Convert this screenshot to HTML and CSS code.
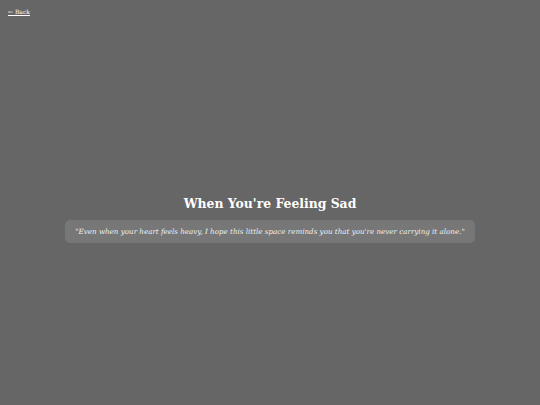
FILE: index.html
```html
<!DOCTYPE html>
<html>
<head>
<meta charset="utf-8">
<link rel="stylesheet" href="styles.css">
</head>
<body>
<div class="page">
  <nav class="topbar"><a class="back" href="#">← Back</a></nav>
  <main class="content">
    <h1 class="title">When You're Feeling Sad</h1>
    <p class="quote">"Even when your heart feels heavy, I hope this little space reminds you that you're never carrying it alone."</p>
  </main>
</div>
</body>
</html>
```
FILE: styles.css
```css
html, body {
  margin: 0;
  padding: 0;
  background: #666666;
}
.page {
  height: 405px;
  display: flex;
  flex-direction: column;
  font-family: "DejaVu Serif", serif;
  color: #ffffff;
}
.topbar {
  padding: 4px 8px 0 8px;
  height: 12px;
  line-height: 10px;
}
.back {
  color: #ffffff;
  font-size: 6px;
  text-decoration: underline;
}
.content {
  flex: 1;
  display: flex;
  flex-direction: column;
  align-items: center;
  justify-content: center;
  padding-top: 17px;
}
.title {
  margin: 0 0 8px 0;
  font-size: 12.4px;
  line-height: 16px;
  font-weight: bold;
}
.quote {
  margin: 0;
  padding: 7px 10px;
  background: #777777;
  border-radius: 5px;
  font-style: italic;
  font-size: 7.15px;
  line-height: 9px;
  color: #f0f0f0;
}
```
